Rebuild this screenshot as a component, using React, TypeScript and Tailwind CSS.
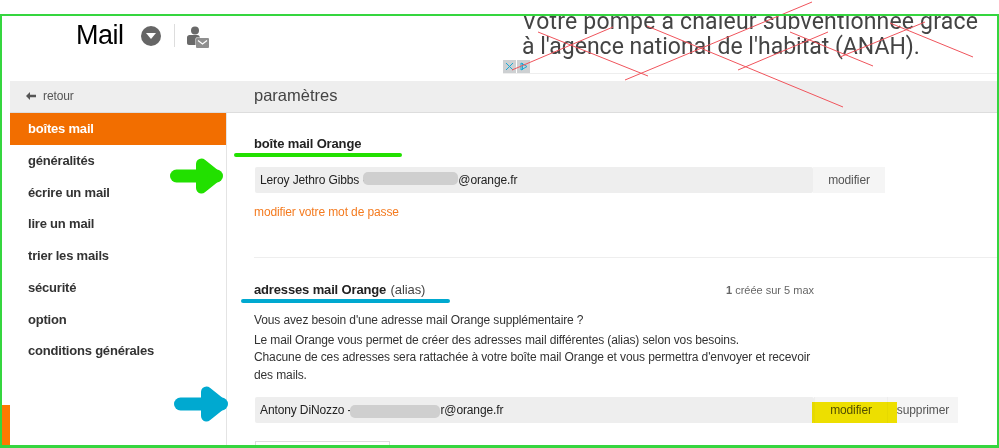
import React from "react";

const menu = ["généralités", "écrire un mail", "lire un mail", "trier les mails", "sécurité", "option", "conditions générales"];

function UserMail() {
  return (
    <svg width="22" height="22" viewBox="0 0 22 22" fill="#696969" className="block">
      <circle cx="8" cy="4.500" r="4" />
      <path d="M0 11.500C0 10 1.200 9 2.500 9h7.500c1.500 0 2.500.8 3 2.500H10C9 11.500 8.500 12.200 8.500 13v6H2C.8 19 0 18.300 0 17z" />
      <rect x="9" y="12" width="13" height="10" rx="1" fill="#8f8f8f" />
      <path d="M11 14.500l4.500 3.500 4.500-3.500" fill="none" stroke="#fff" strokeWidth="1.200" />
    </svg>
  );
}

function Arrow({ color, tip, half }: { color: string; tip: number; half: number }) {
  return (
    <svg width="62" height="40" viewBox="0 0 62 40" fill="none" stroke={color} strokeLinecap="round" strokeLinejoin="round">
      <path d={`M8.500 20H${tip}`} strokeWidth="13" />
      <path d={`M${tip - 15} ${20 - half}L${tip} 20L${tip - 15} ${20 + half}Z`} strokeWidth="11" fill={color} />
    </svg>
  );
}

function Row({ name, rest, blur, actions, width }: { name: string; rest: string; blur: string; actions: React.ReactNode; width: string }) {
  return (
    <div className="ml-px flex h-[26px] items-center text-[12px] tracking-[-0.12px] text-[#222222]">
      <div className={`flex h-full items-center rounded-[2px] bg-[#eeeeee] pl-[5px] ${width}`}>
        <span className="shrink-0">{name}</span>
        <span className={`h-[13px] shrink-0 rounded-[5px] bg-[#cfcfcf] ${blur}`} />
        <span className="shrink-0">{rest}</span>
      </div>
      {actions}
    </div>
  );
}

export default function App() {
  return (
    <div className="relative h-[448px] w-[999px] overflow-hidden bg-white font-['Liberation_Sans',Arial,sans-serif]">
      <header className="flex h-[81px]">
        <div className="flex w-[503px] items-start pl-[76px] pt-[19px]">
          <span className="text-[27px] leading-[33px] tracking-[-0.5px] text-black">Mail</span>
          <span className="ml-[17px] mt-[7px] flex h-[20px] w-[20px] items-center justify-center rounded-full bg-[#666666]">
            <svg width="10" height="6" viewBox="0 0 10 6"><path d="M0 0h10L5 6z" fill="#fff" /></svg>
          </span>
          <span className="ml-[13px] mt-[5px] h-[23px] w-px bg-[#dddddd]" />
          <span className="ml-[12px] mt-[7px]"><UserMail /></span>
        </div>
        <div className="relative mt-[15px] h-[59px] flex-1 overflow-hidden border-b border-[#eeeeee] pl-[19px]">
          <p className="-mt-[6px] font-['Roboto',sans-serif] text-[23px] leading-[25px] tracking-[0.18px] text-[#444444]">
            Votre pompe à chaleur subventionnée grace<br />
            <span className="tracking-normal">à l'agence national de l'habitat (ANAH).</span>
          </p>
          <div className="absolute bottom-0 left-0 flex gap-px">
            <span className="flex h-[13px] w-[13px] items-center justify-center bg-[#cdd0d2] text-[#19a9d6]">
              <svg width="9" height="9" viewBox="0 0 9 9"><path d="M1 1l7 7M8 1L1 8" stroke="currentColor" fill="none" /></svg>
            </span>
            <span className="flex h-[13px] w-[13px] items-center justify-center bg-[#cdd0d2] text-[#19a9d6]">
              <svg width="9" height="9" viewBox="0 0 9 9"><path d="M2 1l6 3.500L2 8zM3.500 1v7" stroke="currentColor" fill="none" /></svg>
            </span>
          </div>
        </div>
      </header>

      <div className="ml-[10px] flex h-[32px] items-center border-b border-[#dddddd] bg-[#eeeeee] pb-[2px]">
        <div className="flex w-[216px] items-center pl-[16px] text-[12px] tracking-[-0.12px] text-[#555555]">
          <svg width="10" height="8" viewBox="0 0 10 8" fill="#555555"><path d="M0 4l4-4v2.800h6v2.400H4V8z" /></svg>
          <span className="ml-[7px]">retour</span>
        </div>
        <div className="pl-[28px] text-[16.500px] text-[#444444]">paramètres</div>
      </div>

      <div className="ml-[10px] flex h-[335px]">
        <nav className="w-[216px] shrink-0 text-[13px] font-bold tracking-[-0.2px] text-[#333333]">
          <div className="flex h-[32px] items-center bg-[#f26e00] pl-[18px] text-white">boîtes mail</div>
          <ul>
            {menu.map((m) => (
              <li key={m} className="flex h-[31.700px] items-center pl-[18px]">{m}</li>
            ))}
          </ul>
        </nav>

        <main className="flex-1 border-l border-[#e4e4e4] pl-[27px] text-[12px] tracking-[-0.12px] text-[#333333]">
          <h2 className="pt-[23px] text-[13px] font-bold leading-[16px] tracking-[-0.15px] text-[#222222]">boîte mail Orange</h2>
          <div className="mt-[15px]">
            <Row
              name="Leroy Jethro Gibbs -"
              blur="-ml-[3px] mb-[3px] w-[95px]"
              rest="@orange.fr"
              width="w-[558px]"
              actions={<span className="flex h-full w-[72px] items-center justify-center bg-[#f5f5f5] text-[#555555]">modifier</span>}
            />
          </div>
          <a className="mt-[12px] block text-[12px] leading-[14px] text-[#f47b20]">modifier votre mot de passe</a>

          <div className="mt-[38px] border-t border-[#eeeeee] pt-[24px]">
            <div className="flex w-[560px] items-baseline justify-between">
              <h2 className="text-[13px] font-bold leading-[16px] tracking-[-0.15px] text-[#222222]">
                adresses mail Orange <span className="ml-[1px] text-[13px] font-normal tracking-[-0.1px] text-[#444444]">(alias)</span>
              </h2>
              <span className="text-[11px] tracking-normal text-[#666666]"><b>1</b> créée sur 5 max</span>
            </div>
            <p className="mt-[13px] leading-[16px]">Vous avez besoin d'une adresse mail Orange supplémentaire ?</p>
            <p className="mt-[4px] w-[560px] leading-[17.500px]">
              Le mail Orange vous permet de créer des adresses mail différentes (alias) selon vos besoins.<br />
              Chacune de ces adresses sera rattachée à votre boîte mail Orange et vous permettra d'envoyer et recevoir des mails.
            </p>
            <div className="mt-[13px]">
              <Row
                name="Antony DiNozzo -"
                blur="-ml-[1px] mt-[3px] w-[90px]"
                rest="r@orange.fr"
                width="w-[559px]"
                actions={
                  <>
                    <span className="flex h-full w-[73px] items-center justify-center border-l border-[#eeeeee] bg-[#f5f5f5] text-[#555555]">modifier</span>
                    <span className="flex h-full w-[71px] items-center justify-center border-l border-[#eeeeee] bg-[#f5f5f5] text-[#555555]">supprimer</span>
                  </>
                }
              />
            </div>
            <div className="ml-px mt-[18px] h-[20px] w-[135px] border border-[#dddddd]" />
          </div>
        </main>
      </div>

      {/* Annotations drawn over the page */}
      <span className="absolute bottom-[2px] left-[2px] h-[41px] w-[8px] bg-[#ff7900]" />
      <span className="absolute left-[234px] top-[153px] h-[4px] w-[168px] rounded-full bg-[#22e000]" />
      <span className="absolute left-[241px] top-[299px] h-[4px] w-[209px] rounded-full bg-[#00a9d0]" />
      <span className="absolute left-[168px] top-[156px]"><Arrow color="#22e000" tip={48.500} half={12} /></span>
      <span className="absolute left-[172px] top-[384px]"><Arrow color="#00a9d0" tip={49.500} half={12} /></span>
      <span className="absolute left-[812px] top-[402px] h-[21px] w-[85px] bg-[#f7e900] mix-blend-multiply" />
      <svg className="absolute inset-0" width="999" height="448" fill="none" stroke="#f0545c" strokeWidth="1">
        <path d="M812 2L625 80M538 32L648 76M613 27L512 70M647 26L843 107M828 32L738 70M790 32L873 66M925 22L840 57M890 23L973 57" />
      </svg>
      <div className="pointer-events-none absolute inset-x-0 bottom-0 top-[14px] border-2 border-b-[3px] border-[#35d63f]" />
    </div>
  );
}
